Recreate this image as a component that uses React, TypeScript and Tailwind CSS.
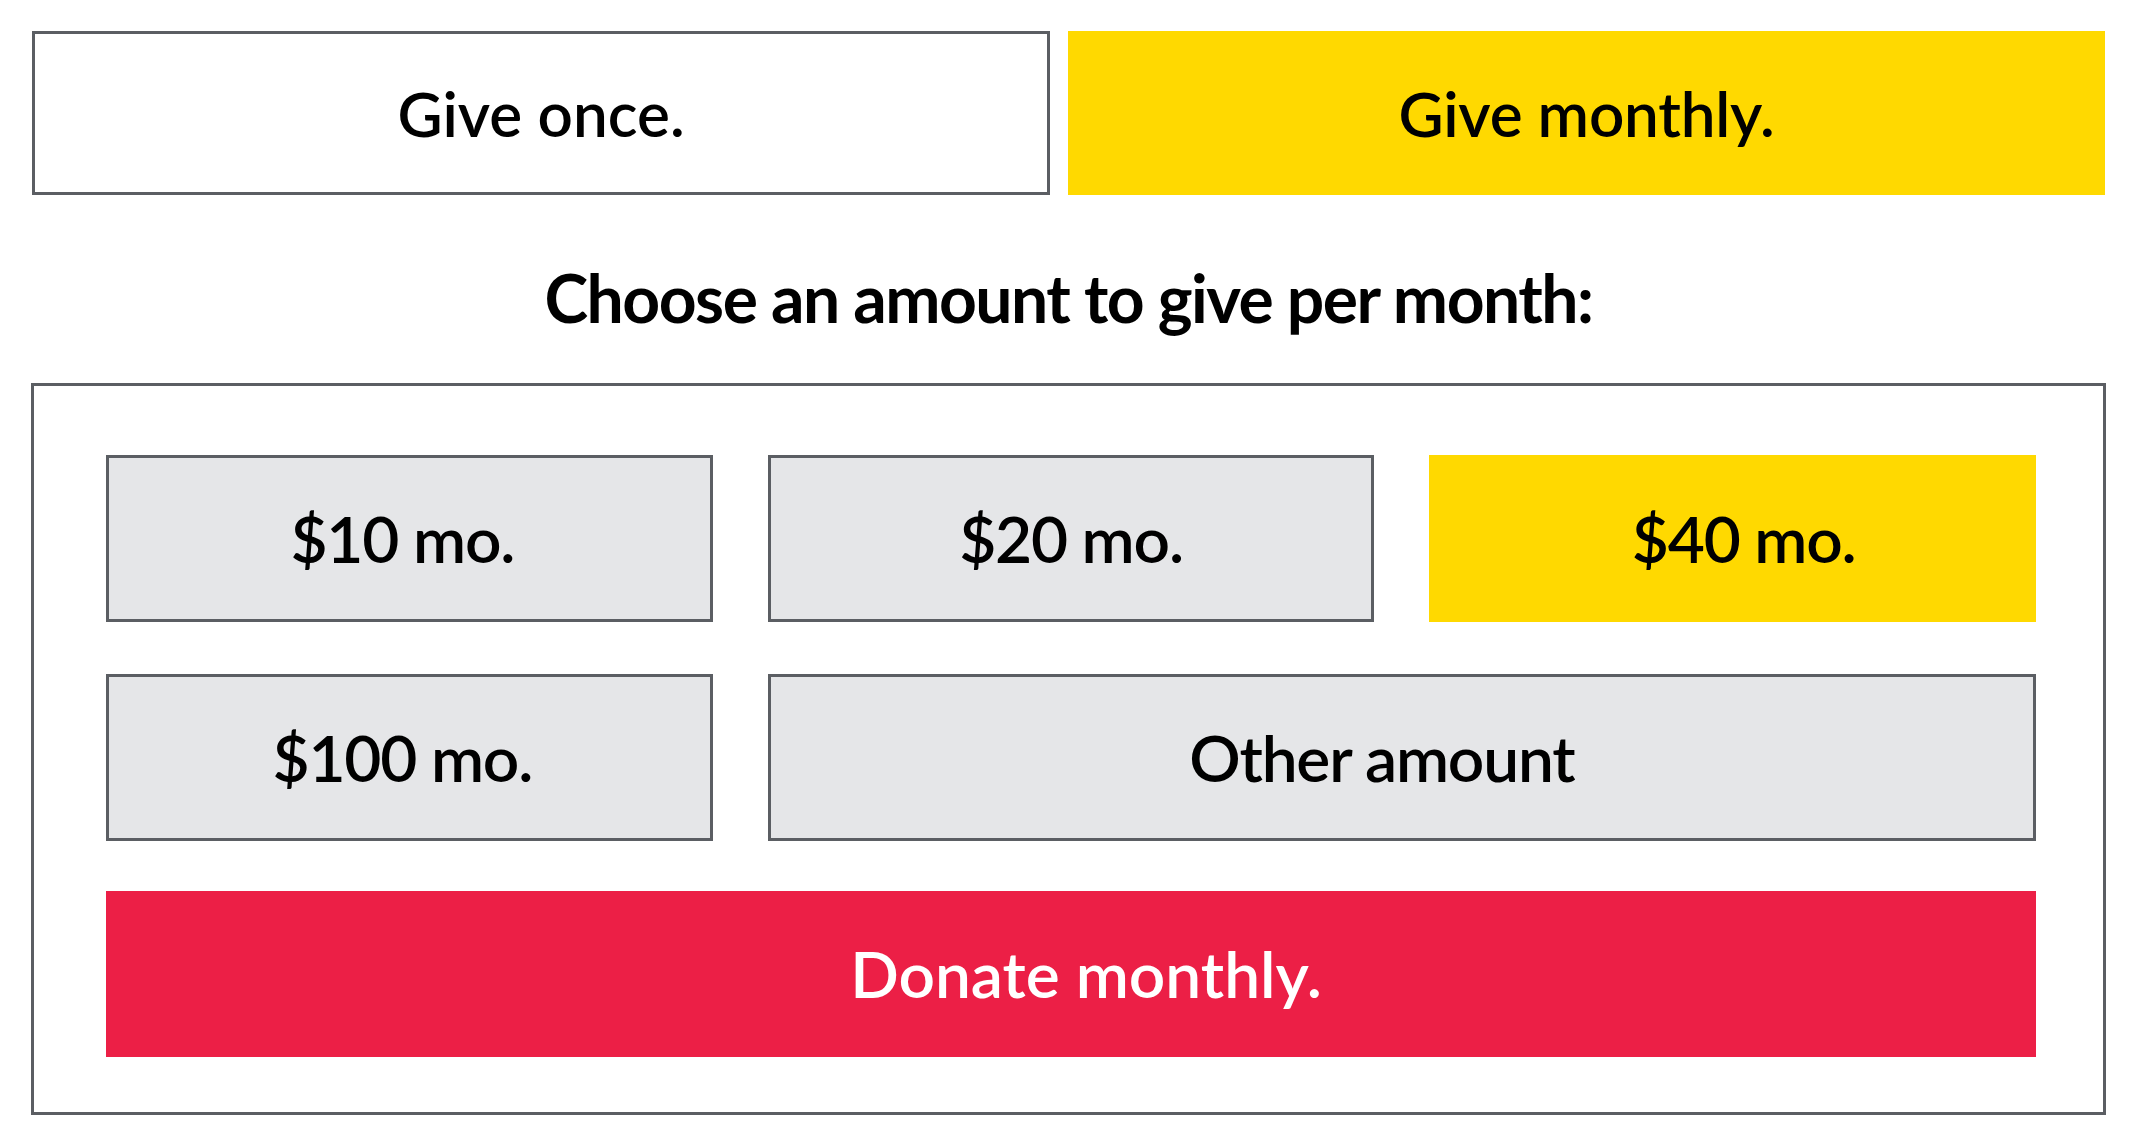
import React from "react"

const font = { fontFamily: "Lato, 'Open Sans', sans-serif" }

function AmountButton({ label, active, className = "" }: { label: string; active?: boolean; className?: string }) {
  return (
    <div
      className={`flex h-[167px] items-center justify-center text-[64px] font-semibold tracking-[-1.2px] text-black ${
        active ? "bg-[#ffd900]" : "border-[3px] border-[#5b5e63] bg-[#e5e6e8]"
      } ${className}`}
    >
      {label}
    </div>
  )
}

export default function App() {
  return (
    <div className="h-[1148px] w-[2137px] bg-white pt-[31px]" style={font}>
      <div className="flex gap-[18px] pl-[32px] pr-[32px]">
        <div className="flex h-[164px] w-[1018px] items-center justify-center border-[3px] border-[#5b5e63] text-[62px] font-semibold tracking-[0px] text-black">
          Give once.
        </div>
        <div className="flex h-[164px] flex-1 items-center justify-center bg-[#ffd900] text-[62px] font-semibold tracking-[-0.2px] text-black">
          Give monthly.
        </div>
      </div>

      <h2 className="flex h-[188px] items-center justify-center pt-[16px] text-[66px] font-bold tracking-[-1.5px] text-black">
        Choose an amount to give per month:
      </h2>

      <div className="ml-[31px] w-[2075px] border-[3px] border-[#5b5e63] pb-[55px] pl-[72px] pr-[67px] pt-[69px]">
        <div className="grid grid-cols-3 gap-x-[55px] gap-y-[52px]">
          <AmountButton label="$10 mo." className="pr-[14px]" />
          <AmountButton label="$20 mo." />
          <AmountButton label="$40 mo." active className="pl-[22px]" />
          <AmountButton label="$100 mo." className="pr-[14px]" />
          <AmountButton label="Other amount" className="col-span-2 pr-[40px] tracking-[-0.5px]" />
        </div>
        <button className="mt-[50px] flex h-[166px] w-full items-center justify-center bg-[#ec1f46] pl-[30px] text-[64px] font-semibold tracking-[0px] text-white">
          Donate monthly.
        </button>
      </div>
    </div>
  )
}
